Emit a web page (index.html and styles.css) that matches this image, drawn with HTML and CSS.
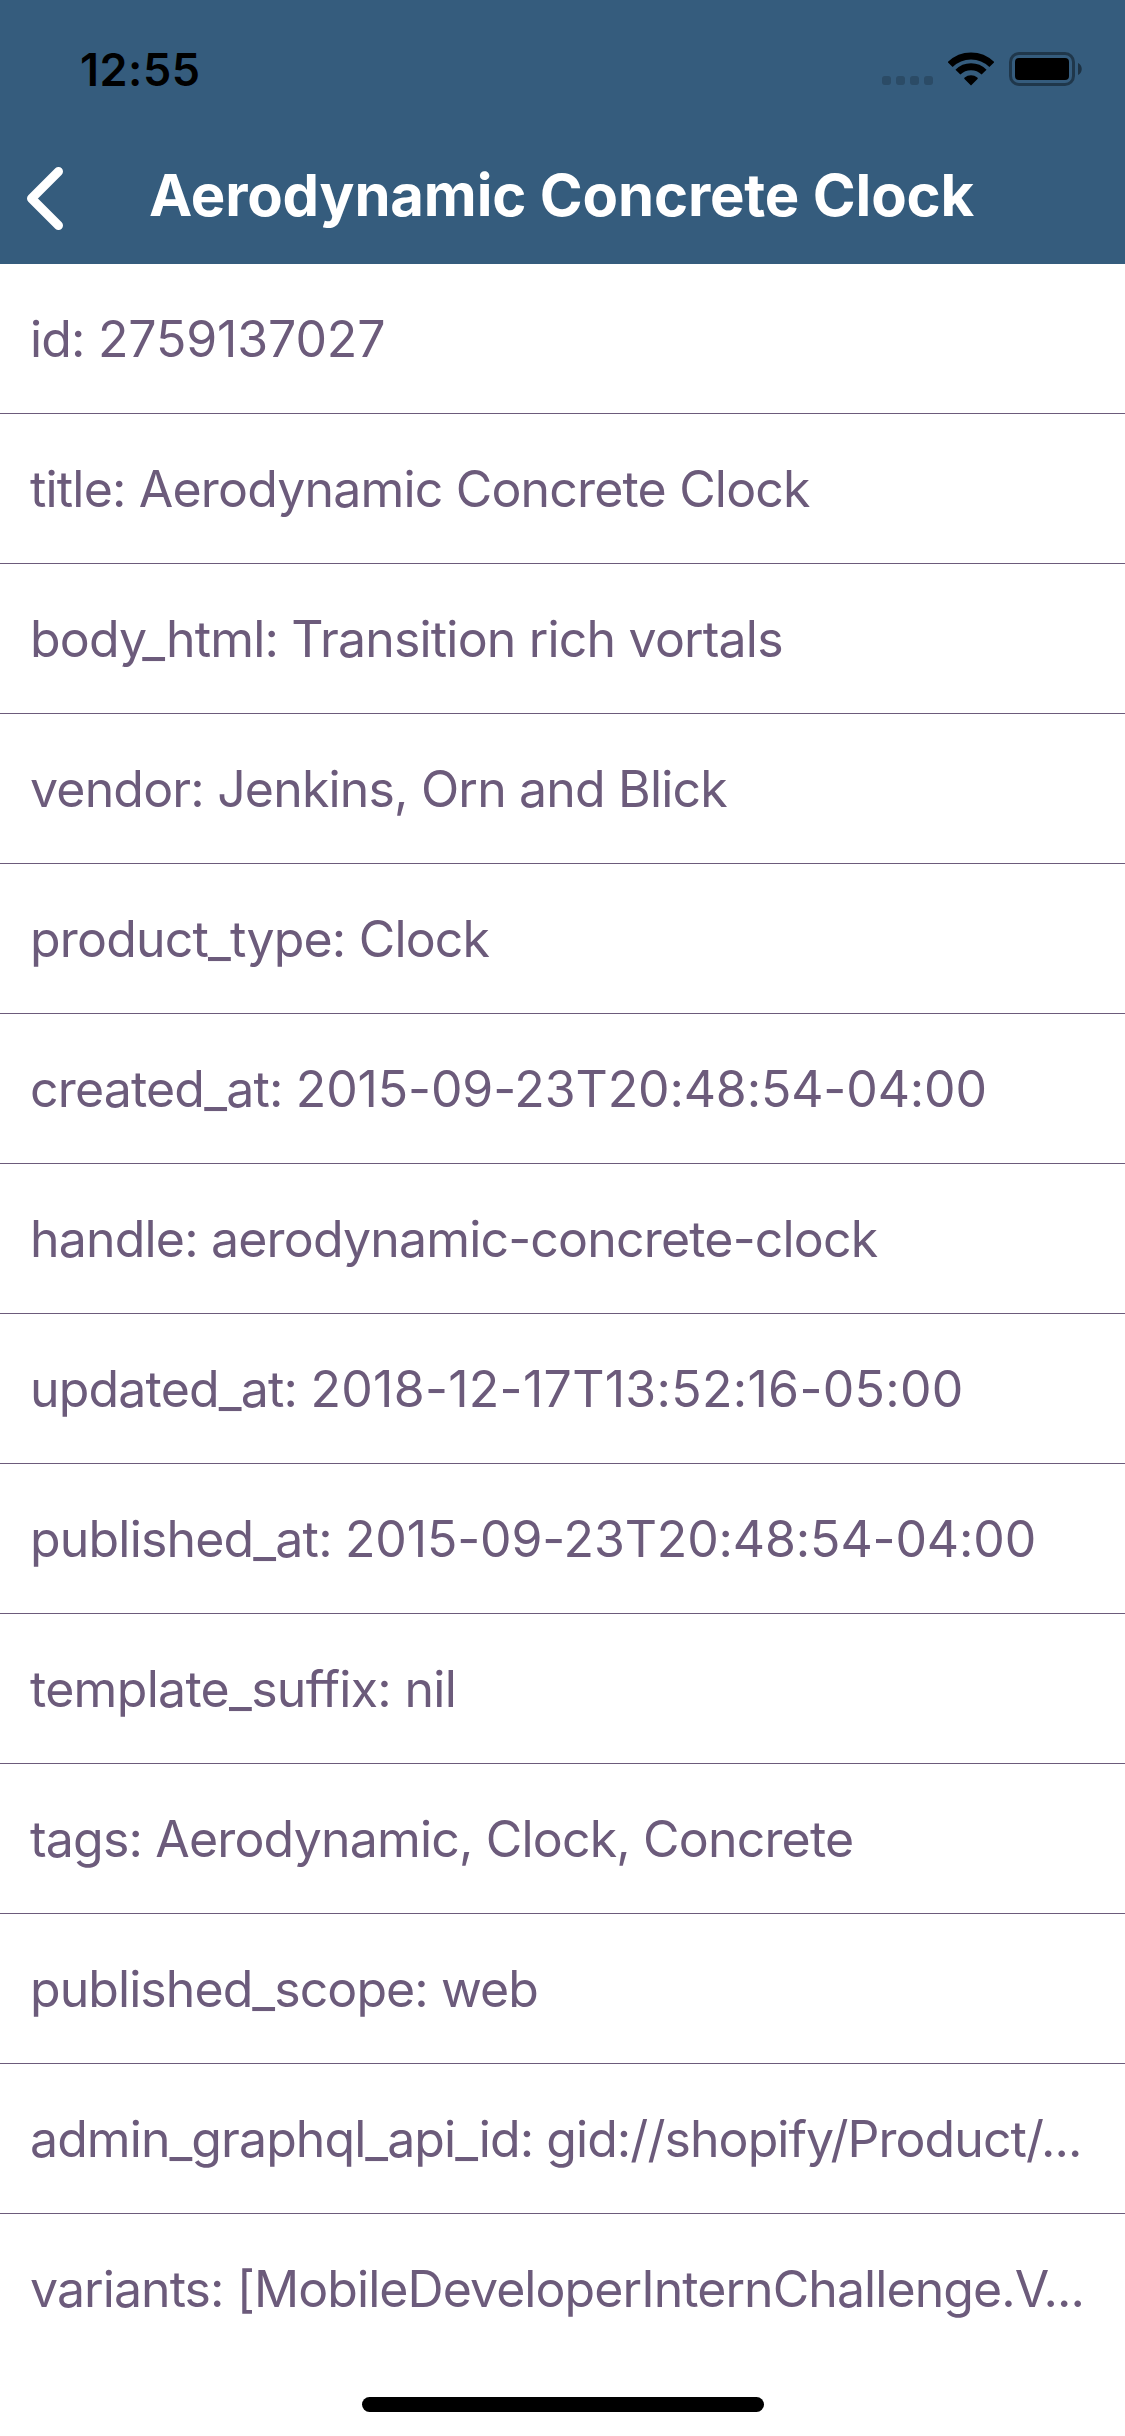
FILE: index.html
```html
<!DOCTYPE html>
<html lang="en">
<head>
<meta charset="utf-8">
<title>Aerodynamic Concrete Clock</title>
<link rel="stylesheet" href="styles.css">
</head>
<body>
<header class="header">
  <div class="status">
    <span class="time">12:55</span>
    <div class="indicators">
      <span class="dots"><i></i><i></i><i></i><i></i></span>
      <svg class="wifi" width="46" height="34" viewBox="0 0 46 34"><path class="arc" d="M2.140 12.640a29.500 29.500 0 0 1 41.720 0"/><path class="arc" d="M9.920 20.120a18.500 18.500 0 0 1 26.160 0"/><path d="M23 33.500 16.500 27q-.8-.9.200-1.600a10 10 0 0 1 12.600 0q1 .7.200 1.600z"/></svg>
      <svg class="battery" width="73" height="34" viewBox="0 0 73 34"><rect x="1.500" y="1.500" width="63" height="31" rx="8.500" fill="none" stroke="#000" stroke-opacity=".4" stroke-width="3"/><rect x="6" y="6" width="54" height="22" rx="4"/><path d="M69 11c5 2 5 10 0 12z" opacity=".45"/></svg>
    </div>
  </div>
  <nav class="nav">
    <svg class="back" width="38" height="64" viewBox="0 0 38 64"><path d="M32.500 5.500 5.500 32.500l27 27"/></svg>
    <h1 class="title">Aerodynamic Concrete Clock</h1>
  </nav>
</header>
<main class="list">
  <div class="row"><span>id: <b class="digits">2759137027</b></span></div>
  <div class="row"><span>title: Aerodynamic Concrete Clock</span></div>
  <div class="row"><span>body_html: Transition rich vortals</span></div>
  <div class="row"><span>vendor: Jenkins, Orn and Blick</span></div>
  <div class="row"><span>product_type: Clock</span></div>
  <div class="row"><span>created_at: <b class="digits">2015-09-23T20:48:54-04:00</b></span></div>
  <div class="row"><span>handle: aerodynamic-concrete-clock</span></div>
  <div class="row"><span>updated_at: <b class="digits wide">2018-12-17T13:52:16-05:00</b></span></div>
  <div class="row"><span>published_at: <b class="digits">2015-09-23T20:48:54-04:00</b></span></div>
  <div class="row loose"><span>template_suffix: nil</span></div>
  <div class="row"><span>tags: Aerodynamic, Clock, Concrete</span></div>
  <div class="row tight"><span>published_scope: web</span></div>
  <div class="row tight"><span>admin_graphql_api_id: gid://shopify/Product/...</span></div>
  <div class="row tight"><span>variants: [MobileDeveloperInternChallenge.V...</span></div>
</main>
<div class="home"></div>
</body>
</html>
```
FILE: styles.css
```css
* { box-sizing: border-box; }
body { margin: 0; width: 1125px; height: 2436px; background: #fff; font-family: Inter, "Liberation Sans", sans-serif; overflow: hidden; }
.header { height: 264px; background: #355c7d; }
.status { height: 132px; padding: 6px 43px 0 80px; display: flex; align-items: center; justify-content: space-between; }
.time { font-size: 45px; font-weight: 600; color: #000; letter-spacing: .5px; }
.indicators { display: flex; align-items: center; }
.dots { display: flex; gap: 5px; margin: 23px 15px 0 0; }
.dots i { width: 9px; height: 9px; border-radius: 3px; background: #2b4b66; }
.wifi { margin-right: 15px; }
.arc { fill: none; stroke: #000; stroke-width: 7; }
.nav { height: 132px; padding: 0 2px 7px 0; position: relative; display: flex; align-items: center; justify-content: center; }
.back { position: absolute; left: 26px; top: 34px; fill: none; stroke: #fff; stroke-width: 9; stroke-linecap: round; stroke-linejoin: round; }
.title { margin: 0; font-size: 58px; font-weight: 700; color: #fff; white-space: nowrap; letter-spacing: -.15px; }
.row { height: 150px; padding: 0 30px; display: flex; align-items: center; border-bottom: 1px solid #6c5b7b; font-size: 50px; color: #6c5b7b; white-space: nowrap; letter-spacing: -.82px; }
.row:last-child { border-bottom: 0; }
.row.tight { letter-spacing: -.93px; }
.row.loose { letter-spacing: -.7px; }
.digits { font-weight: inherit; letter-spacing: -.13px; }
.digits.wide { letter-spacing: .3px; }
.home { width: 402px; height: 15px; margin: 33px auto 0; border-radius: 8px; background: #000; }
```
